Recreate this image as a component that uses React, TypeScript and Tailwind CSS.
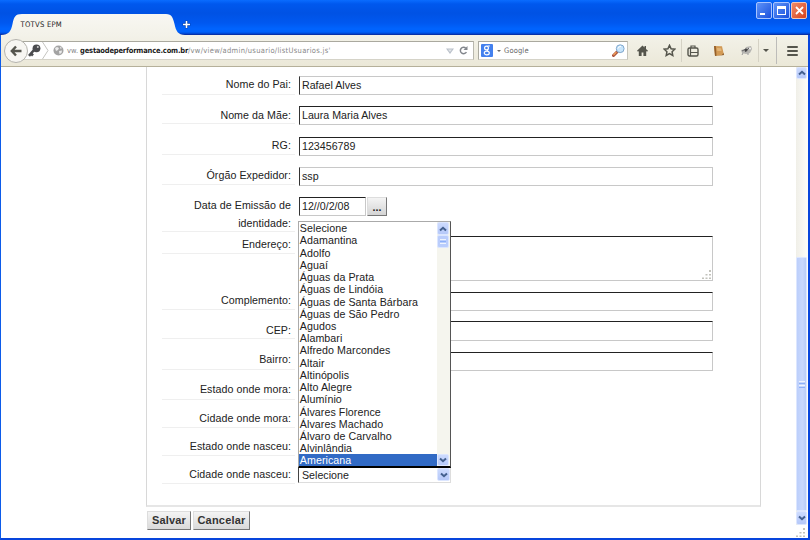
import type { ReactNode } from "react";

const cities = [
  "Selecione", "Adamantina", "Adolfo", "Aguaí", "Águas da Prata", "Águas de Lindóia",
  "Águas de Santa Bárbara", "Águas de São Pedro", "Agudos", "Alambari", "Alfredo Marcondes",
  "Altair", "Altinópolis", "Alto Alegre", "Alumínio", "Álvares Florence", "Álvares Machado",
  "Álvaro de Carvalho", "Alvinlândia", "Americana",
];

function Row({ label, row, pad, children }: { label: string; row: string; pad: string; children?: ReactNode }) {
  return (
    <div className={`flex shrink-0 gap-[4px] ${row}`}>
      <div className={`w-[133px] shrink-0 border-b border-[#efefef] pr-[4px] text-right leading-[18px] tracking-[0.06px] ${pad}`}>
        {label}
      </div>
      {children}
    </div>
  );
}

function Field({ value = "", box }: { value?: string; box: string }) {
  return (
    <div className={`flex shrink-0 items-center border border-t-[#222] border-l-[#333] border-r-[#c8c8c8] border-b-[#c8c8c8] bg-white pl-[2px] leading-none whitespace-nowrap ${box}`}>
      {value}
    </div>
  );
}

function Chevron({ up = false }: { up?: boolean }) {
  return (
    <svg width="8" height="6" viewBox="0 0 8 6" fill="none" stroke="#43608f" strokeWidth="2">
      <path d={up ? "M1 4.6 L4 1.8 L7 4.6" : "M1 1.4 L4 4.2 L7 1.4"} />
    </svg>
  );
}

function ScrollButton({ up, size }: { up?: boolean; size: string }) {
  return (
    <div className={`flex shrink-0 items-center justify-center rounded-[2px] border border-[#dce6ff] bg-gradient-to-b from-[#cddbfe] to-[#b5c8f9] ${size}`}>
      <Chevron up={up} />
    </div>
  );
}

function TitleBar() {
  return (
    <div className="relative flex h-[35px] shrink-0 border-b border-[#0831a8] bg-[linear-gradient(#0a6cff_0px,#0058ee_4px,#0052e4_13px,#0058f0_23px,#0064ff_29px,#0060fa_32px,#0040c8_34px)]">
      <svg className="relative -mb-px h-[35px] w-[186px] shrink-0" viewBox="0 0 186 35">
        <defs>
          <linearGradient id="tab" x1="0" y1="14" x2="0" y2="35" gradientUnits="userSpaceOnUse">
            <stop offset="0" stopColor="#f8f7f2" />
            <stop offset="1" stopColor="#f3f2e9" />
          </linearGradient>
        </defs>
        <path d="M1 35 C9 35 11 31 12.500 24 C14 17 15 14 22 14 H166 C172 14 173 18 174.500 24 C176 31 178 35 185 35 Z" fill="url(#tab)" />
      </svg>
      <div className="absolute top-[19px] left-[20.500px] font-['DejaVu_Sans_Condensed',sans-serif] text-[7.600px] leading-[11px] tracking-[0.250px] whitespace-nowrap text-[#222]">TOTVS EPM</div>
      <svg className="mt-[20px] -ml-[4px] h-[9px] w-[9px]" viewBox="0 0 9 9">
        <path d="M4.500 .7v7.600M.7 4.500h7.600" stroke="#003da8" strokeWidth="3" />
        <path d="M4.500 1v7M1 4.500h7" stroke="#fff" strokeWidth="1.600" />
      </svg>
      <div className="mt-[2px] mr-[3px] ml-auto flex gap-[1px]">
        <div className="h-[17px] w-[16px] rounded-[2px] border border-[#a8c4ff] bg-gradient-to-br from-[#5e92f8] to-[#1b4fdc] pt-[10px] pl-[3px]">
          <div className="h-[2px] w-[5px] bg-white" />
        </div>
        <div className="h-[17px] w-[17px] rounded-[2px] border border-[#a8c4ff] bg-gradient-to-br from-[#5e92f8] to-[#1b4fdc] pt-[3px] pl-[3px]">
          <div className="h-[9px] w-[9px] border border-t-[3px] border-white" />
        </div>
        <div className="flex h-[17px] w-[16px] items-center justify-center rounded-[2px] border border-[#f3c5b5] bg-gradient-to-br from-[#ee8a68] to-[#d63f16]">
          <svg width="9" height="9" viewBox="0 0 9 9" stroke="#fff" strokeWidth="1.800"><path d="M1 1l7 7M8 1L1 8" /></svg>
        </div>
      </div>
    </div>
  );
}

function Toolbar() {
  return (
    <div className="flex h-[32px] shrink-0 items-center border-b border-[#b5b09a] bg-gradient-to-b from-[#f3f2e9] to-[#ebe8d8] pl-[3px] font-['DejaVu_Sans_Condensed',sans-serif]">
      <div className="z-10 flex h-[24px] w-[24px] shrink-0 items-center justify-center rounded-full border border-[#b4b3ad] bg-[#f7f6f2]">
        <svg width="12" height="12" viewBox="0 0 12 12" fill="none" stroke="#55554e" strokeWidth="2.400"><path d="M6 1.500L1.800 6L6 10.500M2 6h9.500" /></svg>
      </div>
      <div className="-ml-[9px] flex h-[19px] w-[455px] shrink-0 items-center border border-t-[#aaa99f] border-r-[#b9b8ae] border-b-[#d5d3c8] border-l-0 bg-white pl-[9px]">
        <svg width="13" height="13" viewBox="0 0 13 13">
          <circle cx="8.500" cy="4.300" r="3.900" fill="#4b4c4f" />
          <path d="M6 6L1 11.800M3 9.500l2 2" stroke="#4b4c4f" strokeWidth="2.600" />
          <circle cx="9.800" cy="3" r="1" fill="#ccc" />
        </svg>
        <svg className="ml-[1px]" width="8" height="17" viewBox="0 0 8 17" fill="none" stroke="#c4c4c0"><path d="M.5 0L6 8.500L.5 17" /></svg>
        <svg className="ml-[3px]" width="11" height="11" viewBox="0 0 11 11">
          <circle cx="5.500" cy="5.500" r="5" fill="#a3a3a3" />
          <path d="M2 3l2-1 2 1-1 2-2 1zM6 6l3-.5-.5 2.500L6.500 9zM7 1.500L9 3 7.500 4z" fill="#ececec" />
        </svg>
        <div className="ml-[3px] flex text-[7.500px] leading-none whitespace-nowrap text-[#888]">
          <span className="w-[13px] tracking-[0.100px]">vw.</span>
          <span className="w-[108px] font-bold tracking-[-0.180px] text-[#1c1c1c]">gestaodeperformance.com.br</span>
          <span className="tracking-[0.300px]">/vw/view/admin/usuario/listUsuarios.js'</span>
        </div>
        <svg className="mr-[5px] ml-auto" width="8" height="6" viewBox="0 0 8 6"><path d="M0 .5h8L4 6z" fill="#b9c0c9" /><path d="M2 1.500h4L4 4z" fill="#e2e5e9" /></svg>
        <svg className="mr-[5px]" width="9" height="9" viewBox="0 0 9 9"><path d="M6.800 2.200A3.200 3.200 0 1 0 7.400 6" fill="none" stroke="#82868c" strokeWidth="1.500" /><path d="M8.500 0v4H4.500z" fill="#82868c" /></svg>
      </div>
      <div className="ml-[4px] flex h-[19px] w-[150px] shrink-0 items-center border border-t-[#aaa99f] border-r-[#c6c5bb] border-b-[#d5d3c8] border-l-[#aaa99f] bg-white pl-[2px]">
        <svg width="12" height="13" viewBox="0 0 12 13">
          <rect width="12" height="13" rx="1" fill="#4380ee" />
          <g fill="none" stroke="#fff" strokeWidth="1.200"><circle cx="5.500" cy="4" r="1.900" /><ellipse cx="5.800" cy="9" rx="2.500" ry="1.900" /><path d="M6.500 2h2.300M7 5.500L6 7" /></g>
        </svg>
        <svg className="ml-[4px]" width="4" height="2" viewBox="0 0 4 2"><path d="M0 0h4L2 2z" fill="#666" /></svg>
        <span className="ml-[3px] text-[7.500px] leading-none tracking-[0.150px] text-[#666]">Google</span>
        <svg className="mr-[2px] ml-auto" width="13" height="13" viewBox="0 0 13 13">
          <path d="M5.500 7.500L1.500 11.500" stroke="#a7503b" strokeWidth="3" strokeLinecap="round" />
          <path d="M4 8.500L1.800 10.700" stroke="#ee9b57" strokeWidth="1.400" strokeLinecap="round" />
          <circle cx="8.200" cy="4.700" r="3.900" fill="#c8e5fb" stroke="#7fa6cb" />
          <path d="M6 4.500Q7 2 9 2.300" stroke="#fff" fill="none" />
        </svg>
      </div>
      <svg className="ml-[9px] shrink-0" width="11" height="12" viewBox="0 0 11 12" fill="#55554c"><path d="M5.500.5L0 5.800l1 .9.800-.6V11h2.800V7.500h1.800V11h2.800V6.100l.8.600 1-.9L9 4V1H7.500v1.400z" /></svg>
      <svg className="ml-[15px] shrink-0" width="13" height="13" viewBox="0 0 13 13" fill="none" stroke="#55554c" strokeWidth="1.500"><path d="M6.500 1.300l1.600 3.400 3.700.5-2.700 2.600.7 3.700-3.300-1.800-3.300 1.800.7-3.700L1.200 5.200l3.700-.5z" /></svg>
      <div className="ml-[5px] h-[23px] w-px shrink-0 bg-[#d5d2c5]" />
      <svg className="ml-[5px] shrink-0" width="12" height="12" viewBox="0 0 12 12" fill="none" stroke="#55554c" strokeWidth="1.400"><rect x="1" y="3" width="10" height="8" rx="1.500" /><path d="M4 3V1h4v2M3.500 3v8M3.500 7.500H11" strokeWidth="1.200" /></svg>
      <svg className="ml-[14px] shrink-0" width="12" height="12" viewBox="0 0 12 12"><path d="M1 1l8 .3L11 10l-9 1z" fill="#d29a55" /><path d="M1 1l1 10 1.500-.2L2.800 1z" fill="#94602b" /><path d="M2 11l9-1-.3-2-2 2z" fill="#8d6132" /><path d="M4 3l4 .2L8.600 6 4.300 6z" fill="#e3b678" /></svg>
      <svg className="ml-[15px] shrink-0" width="13" height="12" viewBox="0 0 13 12"><path d="M1 5l4-1 1-2 5-1 1 3-2 4-4 1-4-1z" fill="#b5b4b0" /><path d="M2 6l4-2M5 7l4-4" stroke="#666" /><circle cx="6" cy="5" r="1.500" fill="#444" /><circle cx="10" cy="3.500" r="1" fill="#f4f4f4" /><path d="M3 8l-1 2M8 8v2" stroke="#999" /></svg>
      <div className="ml-[5px] h-[23px] w-px shrink-0 bg-[#d5d2c5]" />
      <svg className="ml-[4px] shrink-0" width="6" height="3" viewBox="0 0 6 3"><path d="M0 0h6L3 3z" fill="#55554c" /></svg>
      <div className="ml-[7px] h-[27px] w-px shrink-0 bg-[#bdbcb9]" />
      <div className="ml-[10px] flex flex-col gap-[2px]">
        <div className="h-[2px] w-[11px] rounded-full bg-[#55554c]" />
        <div className="h-[2px] w-[11px] rounded-full bg-[#55554c]" />
        <div className="h-[2px] w-[11px] rounded-full bg-[#55554c]" />
      </div>
    </div>
  );
}

function CityList() {
  return (
    <div className="absolute bottom-[14px] -left-px flex h-[247px] w-[153px] border border-b-2 border-t-[#aaa] border-r-[#555] border-b-black border-l-[#aaa] bg-white">
      <div className="min-w-0 flex-1">
        {cities.map((city) => (
          <div key={city} className={`flex h-[12.220px] items-center pt-px pl-[0.800px] leading-none tracking-[0.070px] whitespace-nowrap ${city === "Americana" ? "bg-[#316ac5] text-white" : ""}`}>
            {city}
          </div>
        ))}
      </div>
      <div className="flex w-[13px] shrink-0 flex-col bg-[#f5f5ee]">
        <ScrollButton up size="h-[13px] w-[12px]" />
        <div className="flex h-[13px] w-[12px] flex-col items-center justify-center gap-[1px] rounded-[2px] border border-[#dce6ff] bg-[#bacdfc]">
          <div className="h-px w-[6px] bg-[#eef4fe]" />
          <div className="h-px w-[6px] bg-[#8cb0f8]" />
          <div className="h-px w-[6px] bg-[#eef4fe]" />
        </div>
        <div className="flex-1" />
        <ScrollButton size="h-[12px] w-[12px]" />
      </div>
    </div>
  );
}

function Grip() {
  return (
    <svg width="10" height="10" viewBox="0 0 10 10" fill="#c2c2bb">
      <path d="M7 0h2v2H7zM3.500 4h2v1.500h-2zM7 4h2v1.500H7zM0 7.500h2V9H0zM3.500 7.500h2V9h-2zM7 7.500h2V9H7z" />
    </svg>
  );
}

export default function App() {
  return (
    <div className="flex h-[540px] w-[810px] flex-col overflow-hidden bg-white">
      <TitleBar />
      <div className="flex min-h-0 flex-1 flex-col border-r-2 border-b-2 border-l border-r-[#0845dc] border-b-[#0845dc] border-l-[#0c5bea]">
        <Toolbar />
        <div className="flex min-h-0 flex-1">
          <main className="flex flex-1 flex-col pl-[145px] font-['Liberation_Sans',Arial,sans-serif] text-[10.670px] text-[#222]">
            <div className="flex h-[440px] w-[615px] shrink-0 flex-col border-r border-b-2 border-l border-r-[#d8d8d8] border-b-[#e6e6e6] border-l-[#d8d8d8] pl-[15px]">
              <Row label="Nome do Pai:" row="h-[28px]" pad="pt-[8px]"><Field value="Rafael Alves" box="mt-[9px] h-[19px] w-[414px] border-t-[#c8c8c8]" /></Row>
              <Row label="Nome da Mãe:" row="h-[29px]" pad="pt-[11px]"><Field value="Laura Maria Alves" box="mt-[11px] h-[19px] w-[414px]" /></Row>
              <Row label="RG:" row="h-[31px]" pad="pt-[12px]"><Field value="123456789" box="mt-[13px] h-[19px] w-[414px]" /></Row>
              <Row label="Órgão Expedidor:" row="h-[30px]" pad="pt-[11px]"><Field value="ssp" box="mt-[12px] h-[19px] w-[414px] border-t-[#c8c8c8]" /></Row>
              <Row label="Data de Emissão de identidade:" row="h-[47px]" pad="pt-[11px] pl-[30px]">
                <Field value="12//0/2/08" box="mt-[12px] h-[19px] w-[67px]" />
                <div className="mt-[12px] -ml-[3px] flex h-[19px] w-[20px] items-center justify-center border border-t-[#ddd] border-r-[#777] border-b-[#777] border-l-[#ddd] bg-gradient-to-b from-[#f4f4f4] to-[#d4d4d4] font-bold">...</div>
              </Row>
              <Row label="Endereço:" row="h-[22px]" pad="pt-[3px]">
                <div className="mt-[4px] flex h-[45px] w-[414px] items-end justify-end border border-t-[#222] border-r-[#c8c8c8] border-b-[#c8c8c8] border-l-[#333]"><Grip /></div>
              </Row>
              <Row label="Complemento:" row="h-[56px]" pad="pt-[37px]"><Field box="mt-[38px] h-[19px] w-[414px]" /></Row>
              <Row label="CEP:" row="h-[29px]" pad="pt-[11px]"><Field box="mt-[11px] h-[20px] w-[414px]" /></Row>
              <Row label="Bairro:" row="h-[31px]" pad="pt-[11px]"><Field box="mt-[13px] h-[19px] w-[414px]" /></Row>
              <Row label="Estado onde mora:" row="h-[30px]" pad="pt-[10px]" />
              <Row label="Cidade onde mora:" row="h-[28px]" pad="pt-[9px]" />
              <Row label="Estado onde nasceu:" row="h-[28px]" pad="pt-[9px]" />
              <Row label="Cidade onde nasceu:" row="h-[28px]" pad="pt-[9px]">
                <div className="relative mt-[11px] -ml-px flex h-[16px] w-[153px] items-center justify-between border border-t-0 border-r-[#ddd] border-b-[#ddd] border-l-[#444] bg-white pl-[3px] leading-none">
                  <span className="pt-px">Selecione</span>
                  <ScrollButton size="h-[13px] w-[13px]" />
                  <CityList />
                </div>
              </Row>
            </div>
            <div className="mt-[4px] flex gap-[2px] pl-px text-[11px] leading-none font-bold tracking-[0.200px] text-[#333]">
              <button className="h-[19px] w-[44px] border border-t-[#ddd] border-r-[#777] border-b-[#777] border-l-[#ddd] bg-gradient-to-b from-[#f4f4f4] to-[#dadada]">Salvar</button>
              <button className="h-[19px] w-[57px] border border-t-[#ddd] border-r-[#777] border-b-[#777] border-l-[#ddd] bg-gradient-to-b from-[#f4f4f4] to-[#dadada]">Cancelar</button>
            </div>
          </main>
          <div className="flex w-[12px] shrink-0 flex-col bg-[linear-gradient(90deg,#f0efe8,#fdfdfa)]">
            <ScrollButton up size="h-[12px] w-[11px]" />
            <div className="h-[178px]" />
            <div className="flex h-[254px] w-[11px] flex-col items-center justify-center gap-px rounded-[1px] border border-[#dce6ff] bg-[linear-gradient(90deg,#bccffb,#c9d8fd_60%,#b9ccf8)]">
              <div className="h-px w-[6px] bg-[#eef4fe]" />
              <div className="h-px w-[6px] bg-[#8cb0f8]" />
              <div className="h-px w-[6px] bg-[#eef4fe]" />
              <div className="h-px w-[6px] bg-[#8cb0f8]" />
            </div>
            <ScrollButton size="h-[14px] w-[11px]" />
            <div className="flex flex-1 items-end bg-white"><Grip /></div>
          </div>
        </div>
      </div>
    </div>
  );
}
